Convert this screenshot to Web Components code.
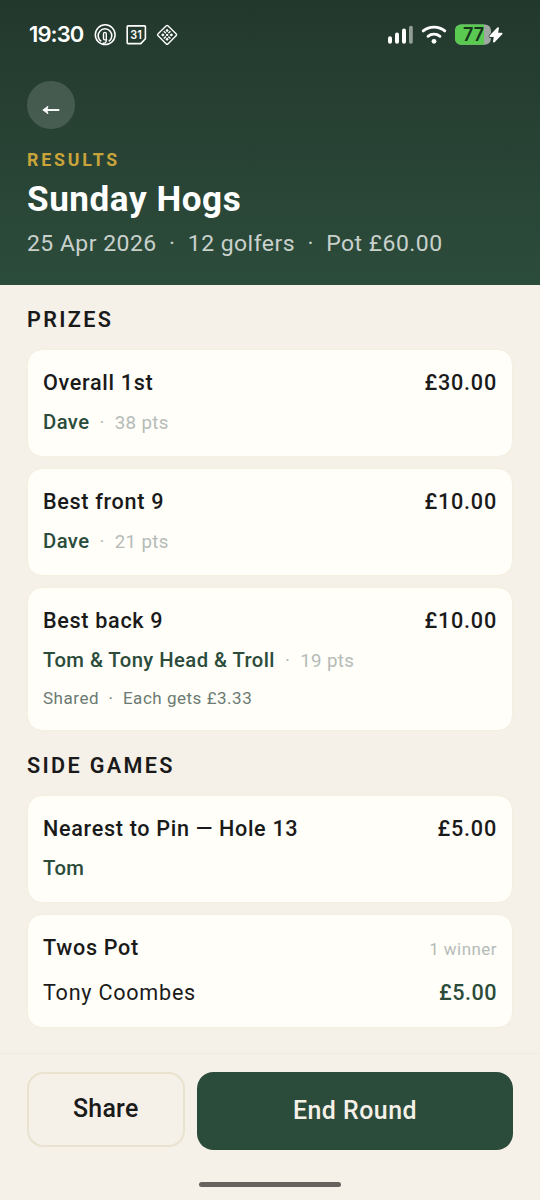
<!DOCTYPE html>
<html lang="en">
<head>
<meta charset="utf-8">
<title>Sunday Hogs – Results</title>
<style>
  html, body { margin: 0; height: 100%; }
  body { background: #f5f0e8; font-family: Roboto, "Liberation Sans", sans-serif; overflow: hidden; }
</style>
</head>
<body>
<results-screen></results-screen>
<script>
  const define = (name, html) => {
    const t = document.createElement('template');
    t.innerHTML = html;
    customElements.define(name, class extends HTMLElement {
      constructor() {
        super();
        this.attachShadow({ mode: 'open' }).append(t.content.cloneNode(true));
      }
    });
  };

  define('status-bar', `
    <style>
      :host { display: flex; align-items: center; height: 69px; padding: 0 37px 0 29px; box-sizing: border-box; color: #fff; }
      .time { font: 600 22px/30px Inter, sans-serif; letter-spacing: -0.9px; width: 64.5px; white-space: nowrap; margin-top: -2px; }
      svg { display: block; flex: none; }
      .gap { flex: 1; }
    </style>
    <span class="time">19:30</span>
    <svg width="84" height="24" viewBox="94 22.9 84 24" fill="none" stroke="#fff" stroke-width="1.5">
      <circle cx="105.2" cy="34.6" r="9.9"/>
      <path d="M101.300 41.200a6.800 6.800 0 1 1 7.400 0"/>
      <path d="M102.600 43c2.200 .600 3.700-.6 3.700-2.800v-6.600c0-1.800-2.800-1.800-2.800 0v4.800c0 1.600 2.400 1.800 3.600.6" stroke-width="1.400"/>
      <path d="M128 25.800h16.600c.5 0 .8.300.8.800v12l-4.600 4.900H128c-.5 0-.8-.300-.8-.8V26.600c0-.5.300-.8.800-.8z" stroke-width="1.600"/>
      <text x="130.300" y="38.800" fill="#fff" stroke="none" font-family="Inter, sans-serif" font-weight="600" font-size="12" textLength="11.500" lengthAdjust="spacingAndGlyphs">31</text>
      <path d="M166.300 25.700q.8-.7 1.600 0l8.400 8.300q.7.700 0 1.400l-8.400 8.400q-.8.700-1.600 0l-8.400-8.400q-.7-.7 0-1.400z" stroke-width="1.400"/>
      <g fill="#fff" stroke="none">
        <path d="M167.100 28.600l1.700 1.900-1.700 1.700-1.700-1.700zM167.100 37.400l1.700 1.700-1.700 1.900-1.700-1.900zM161 34.800l1.900-1.700 1.700 1.700-1.700 1.700zM169.600 34.800l1.700-1.700 1.900 1.700-1.900 1.700z"/>
        <path d="M163.800 31.200l2 1.900M170.400 31.200l-2 1.900M163.800 38.400l2-1.900M170.400 38.400l-2-1.900" stroke="#fff" stroke-width="1.500"/>
        <circle cx="167.100" cy="34.800" r="1.200"/>
      </g>
    </svg>
    <span class="gap"></span>
    <svg width="116" height="24" viewBox="387 22.500 116 24">
      <g fill="#fff">
        <rect x="388" y="35.700" width="4" height="7.600" rx="2"/>
        <rect x="395" y="32" width="4" height="11.300" rx="2"/>
        <rect x="402" y="28" width="4" height="15.300" rx="2"/>
        <rect x="409" y="25.200" width="3.800" height="18.100" rx="1.900" opacity=".5"/>
        <circle cx="434" cy="40.800" r="2.400"/>
      </g>
      <path d="M423.200 30.400c6.100-5.100 15.500-5.100 21.600 0M428 35.800c3.400-2.800 8.600-2.800 12 0" fill="none" stroke="#fff" stroke-width="2.800" stroke-linecap="round"/>
      <rect x="455" y="24" width="36" height="20.300" rx="6" fill="#9ea7a2"/>
      <path d="M461 24h23v20.300h-23a6 6 0 0 1-6-6V30a6 6 0 0 1 6-6z" fill="#5ac952"/>
      <path d="M498 27.700L490.800 35.600h4.400l-1.200 5.400 7.600-7.900h-4.200z" fill="#23392d" stroke="#23392d" stroke-width="4" stroke-linejoin="round"/>
      <path d="M498 27.700L490.300 35.600h4.600l-1 5.400 7.700-7.900h-4.600z" fill="#fff" stroke="#fff" stroke-width="1.900" stroke-linejoin="round"/>
      <text x="463" y="40.600" textLength="21" font-family="Inter, sans-serif" font-weight="600" font-size="18" fill="#16331b">77</text>
    </svg>`);

  define('round-header', `
    <style>
      :host { display: block; height: 284.5px; box-sizing: border-box; background: linear-gradient(#23382d, #2c4c3b); color: #fff; }
      .body { padding: 12px 27px 0; }
      .back { display: grid; place-items: center; width: 47.500px; height: 47.500px; border: 0; padding: 11px 0 0 0; box-sizing: border-box; border-radius: 50%; background: rgba(255,255,255,.15); }
      .back svg { display: block; }
      .eyebrow { margin-top: 21px; font-weight: 700; font-size: 17.700px; line-height: 20px; letter-spacing: 2.85px; color: #c9a43a; }
      h1 { margin: 8px 0 0; font-weight: 700; font-size: 35.100px; line-height: 42px; letter-spacing: 0.55px; }
      .meta { margin-top: 10px; font-size: 22.950px; line-height: 27px; letter-spacing: .48px; color: rgba(255,255,255,.75); white-space: pre; }
    </style>
    <status-bar></status-bar>
    <div class="body">
      <button class="back" aria-label="Back">
        <svg width="18" height="10" viewBox="0 0 18 10"><path d="M3 5h14.300" stroke="#fff" stroke-width="1.900"/><path d="M.800 5L6 1.200 4.800 5 6 8.800z" fill="#fff" stroke="#fff" stroke-width=".8" stroke-linejoin="round"/></svg>
      </button>
      <div class="eyebrow"><slot name="eyebrow"></slot></div>
      <h1><slot></slot></h1>
      <div class="meta"><slot name="meta"></slot></div>
    </div>`);

  define('section-title', `
    <style>
      :host { display: block; font-weight: 600; font-size: 21.600px; line-height: 26px; letter-spacing: 2.35px; color: #1a1a1a; }
    </style>
    <slot></slot>`);

  define('prize-card', `
    <style>
      :host { display: block; box-sizing: border-box; border: 1.350px solid #f5efe0; border-radius: 15px; background: #fffef9; padding: 19px 15px 0; height: var(--h, 108px); margin-bottom: 11px; background-clip: padding-box; color: #1a1a1a; }
      .row { display: flex; justify-content: space-between; align-items: baseline; font-weight: 500; font-size: 21.600px; line-height: 28px; letter-spacing: .8px; }
      ::slotted([slot=title]) { letter-spacing: .68px; }
      ::slotted([slot=note]) { font-weight: 400; font-size: 17px; letter-spacing: .45px; color: #b5bbb7; }
    </style>
    <div class="row"><slot name="title"></slot><span><slot name="amount"></slot><slot name="note"></slot></span></div>
    <slot></slot>`);

  define('winner-line', `
    <style>:host { display: block; margin-top: 12px; font-weight: 500; font-size: 20.250px; line-height: 27px; letter-spacing: .44px; color: #2c4c3b; }
      ::slotted(span) { font-weight: 400; font-size: 18.700px; letter-spacing: .36px; color: #b5bbb7; }
    </style><slot></slot>`);

  define('share-line', `
    <style>:host { display: block; margin-top: 12px; font-size: 17px; line-height: 22px; letter-spacing: .52px; color: #6b7a72; }</style><slot></slot>`);

  define('payout-line', `
    <style>
      :host { display: flex; justify-content: space-between; margin-top: 16px; font-size: 21.600px; line-height: 28px; letter-spacing: .75px; }
      ::slotted([slot=amount]) { font-weight: 500; letter-spacing: .5px; color: #2c4c3b; }
    </style><slot></slot><slot name="amount"></slot>`);

  define('action-bar', `
    <style>
      :host { display: block; height: 147px; box-sizing: border-box; border-top: 1px solid #f1ebdd; padding: 18px 27px 0; }
      .row { display: grid; grid-template-columns: 157.500px 316px; column-gap: 12.500px; align-items: start; }
      button { font: 500 24.900px/28px Roboto, sans-serif; border-radius: 16.500px; box-sizing: border-box; padding: 0; margin: 0; }
      .share { height: 74.500px; border: 2px solid #e9e2cf; background: transparent; color: #1a1a1a; letter-spacing: .25px; }
      .end { height: 77.500px; border: 0; background: #2c4c3b; color: #f5f0e8; letter-spacing: .5px; }
      .home { width: 142px; height: 5px; border-radius: 3px; background: #66635f; margin: 32.500px auto 0; }
    </style>
    <div class="row"><button class="share"><slot name="secondary"></slot></button><button class="end"><slot name="primary"></slot></button></div>
    <div class="home"></div>`);

  define('results-screen', `
    <style>
      :host { display: flex; flex-direction: column; width: 540px; height: 1200px; background: #f5f0e8; }
      main { flex: 1; padding: 22.500px 27px 0; min-height: 0; }
      section-title { margin-bottom: 16px; }
      .side { margin-top: 22px; }
    </style>
    <round-header><span slot="eyebrow">RESULTS</span>Sunday Hogs<span slot="meta">25 Apr 2026 &nbsp;·&nbsp; 12 golfers &nbsp;·&nbsp; Pot £60.00</span></round-header>
    <main>
      <section-title>PRIZES</section-title>
      <prize-card><span slot="title">Overall 1st</span><span slot="amount">£30.00</span><winner-line>Dave<span> &nbsp;·&nbsp; 38 pts</span></winner-line></prize-card>
      <prize-card><span slot="title">Best front 9</span><span slot="amount">£10.00</span><winner-line>Dave<span> &nbsp;·&nbsp; 21 pts</span></winner-line></prize-card>
      <prize-card style="--h:144px"><span slot="title">Best back 9</span><span slot="amount">£10.00</span><winner-line>Tom &amp; Tony Head &amp; Troll<span> &nbsp;·&nbsp; 19 pts</span></winner-line><share-line>Shared &nbsp;·&nbsp; Each gets £3.33</share-line></prize-card>
      <section-title class="side">SIDE GAMES</section-title>
      <prize-card><span slot="title">Nearest to Pin — Hole 13</span><span slot="amount">£5.00</span><winner-line>Tom</winner-line></prize-card>
      <prize-card style="--h:114px"><span slot="title">Twos Pot</span><span slot="note">1 winner</span><payout-line>Tony Coombes<span slot="amount">£5.00</span></payout-line></prize-card>
    </main>
    <action-bar><span slot="secondary">Share</span><span slot="primary">End Round</span></action-bar>`);
</script>
</body>
</html>
